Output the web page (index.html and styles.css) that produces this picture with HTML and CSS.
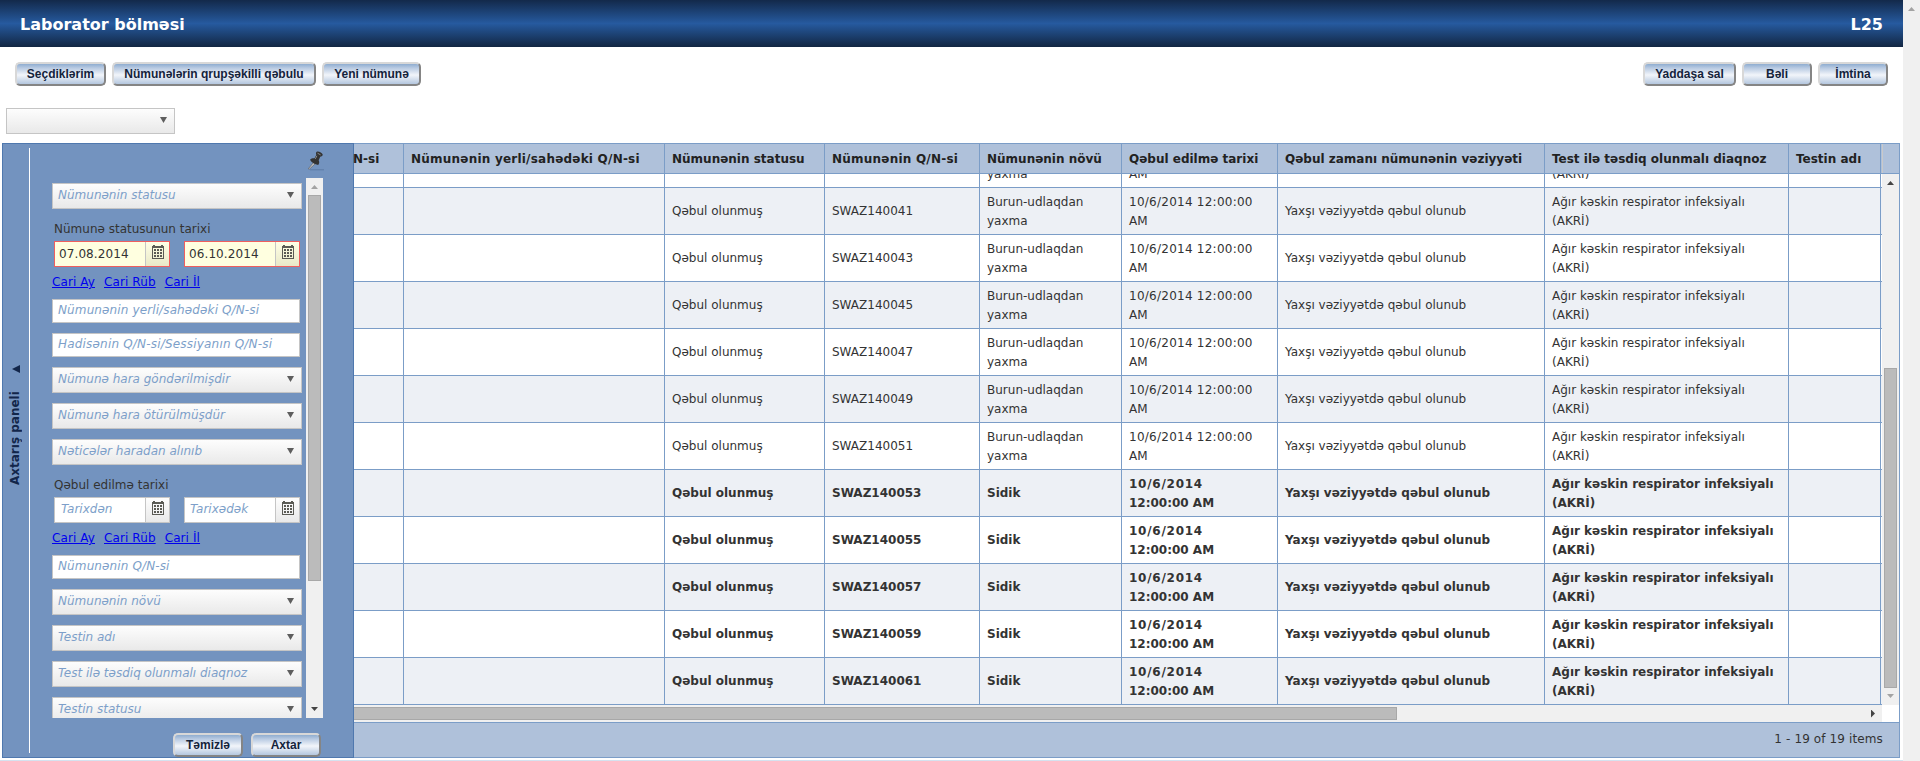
FILE: index.html
```
<!DOCTYPE html>
<html lang="az">
<head>
<meta charset="utf-8">
<title>Laborator bölməsi</title>
<link rel="stylesheet" href="styles.css">
</head>
<body>
<div class="page">
  <header class="titlebar"><h1>Laborator bölməsi</h1><span class="code">L25</span></header>
  <div class="toolbar">
    <button class="btn w1">Seçdiklərim</button>
    <button class="btn w2">Nümunələrin qrupşəkilli qəbulu</button>
    <button class="btn w3">Yeni nümunə</button>
    <span class="grow"></span>
    <button class="btn w4">Yaddaşa sal</button>
    <button class="btn w5">Bəli</button>
    <button class="btn w5">İmtina</button>
  </div>
  <div class="filter-row"><div class="select top-select"><span></span><i class="caret"></i></div></div>
  <main class="work">
    <aside class="search">
      <div class="rail"><span class="rail-text">Axtarış paneli</span><i class="rail-arrow"></i></div>
      <div class="panel">
        <div class="pin-row">
          <svg class="pin" width="18" height="20" viewBox="0 0 18 20"><path d="M3 18.800h14" stroke="#5d7ba5" stroke-width="1"/><path d="M6.500 11.500 1.300 17.800 2.100 18.300 8.200 12.800z" fill="#c9c9c9" stroke="#555" stroke-width=".6"/><path d="M3 8.800C4.600 7.200 6 7 7.500 7.300L9.300 3.900C8.700 2.400 9 1 10.100.6 12.500.4 15.200 1.800 15.800 3.800 15.300 5.200 14.200 5.700 13.200 5.700L11.700 9.300C12.500 10.800 12.400 12.600 11.200 14 8 13.500 4.500 11.700 3 8.800z" fill="#333"/><path d="M10.500 2.200 13.600 3.900M9.900 4.800 8.300 7.900" stroke="#888" fill="none"/></svg>
        </div>
        <div class="form-area">
          <form class="fields">
            <div class="select"><span>Nümunənin statusu</span><i class="caret"></i></div>
            <label class="cap">Nümunə statusunun tarixi</label>
            <div class="dates">
              <div class="date hot"><span>07.08.2014</span><b><svg class="cal"><use href="#cal"/></svg></b></div>
              <div class="date hot"><span>06.10.2014</span><b><svg class="cal"><use href="#cal"/></svg></b></div>
            </div>
            <div class="links"><a>Cari Ay</a><a>Cari Rüb</a><a>Cari İl</a></div>
            <div class="input ls1">Nümunənin yerli/sahədəki Q/N-si</div>
            <div class="input ls2">Hadisənin Q/N-si/Sessiyanın Q/N-si</div>
            <div class="select"><span>Nümunə hara göndərilmişdir</span><i class="caret"></i></div>
            <div class="select"><span>Nümunə hara ötürülmüşdür</span><i class="caret"></i></div>
            <div class="select"><span>Nəticələr haradan alınıb</span><i class="caret"></i></div>
            <label class="cap">Qəbul edilmə tarixi</label>
            <div class="dates">
              <div class="date from"><span>Tarixdən</span><b><svg class="cal"><use href="#cal"/></svg></b></div>
              <div class="date"><span>Tarixədək</span><b><svg class="cal"><use href="#cal"/></svg></b></div>
            </div>
            <div class="links"><a>Cari Ay</a><a>Cari Rüb</a><a>Cari İl</a></div>
            <div class="input ls1">Nümunənin Q/N-si</div>
            <div class="select"><span>Nümunənin növü</span><i class="caret"></i></div>
            <div class="select"><span>Testin adı</span><i class="caret"></i></div>
            <div class="select"><span>Test ilə təsdiq olunmalı diaqnoz</span><i class="caret"></i></div>
            <div class="select"><span>Testin statusu</span><i class="caret"></i></div>
          </form>
          <div class="vscroll"><i class="up off"></i><div class="thumb form-thumb"></div><span class="grow"></span><i class="down"></i></div>
        </div>
        <div class="actions"><button class="btn w5">Təmizlə</button><button class="btn w5">Axtar</button></div>
      </div>
    </aside>
    <section class="grid">
      <div class="head"><div class="cell c0">N-si</div><div class="cell ls3">Nümunənin yerli/sahədəki Q/N-si</div><div class="cell">Nümunənin statusu</div><div class="cell ls3">Nümunənin Q/N-si</div><div class="cell">Nümunənin növü</div><div class="cell">Qəbul edilmə tarixi</div><div class="cell">Qəbul zamanı nümunənin vəziyyəti</div><div class="cell">Test ilə təsdiq olunmalı diaqnoz</div><div class="cell">Testin adı</div><div class="cell end"></div></div>
      <div class="middle">
        <div class="rows" id="rows"></div>
        <div class="vscroll"><i class="up"></i><span class="grow"></span><div class="thumb grid-thumb"></div><i class="down off"></i></div>
      </div>
      <div class="hscroll"><div class="track"><div class="hthumb"></div><i class="right"></i></div></div>
      <footer class="pager">1 - 19 of 19 items</footer>
    </section>
  </main>
  <div class="bottom-line"></div>
</div>
<div class="page-scroll"><i class="up off"></i></div>
<svg class="defs" width="0" height="0"><symbol id="cal" viewBox="0 0 12 14"><path fill="#5b5b55" fill-rule="evenodd" d="M0 1h1V0h2v1h6V0h2v1h1v13H0zM1 3v10h10V3z"/><path fill="#5b5b55" d="M2 4h2v2H2zM5 4h2v2H5zM8 4h2v2H8zM2 7h2v2H2zM5 7h2v2H5zM8 7h2v2H8zM2 10h2v2H2zM5 10h2v2H5zM8 10h2v2H8z"/></symbol></svg>
<script src="grid.js"></script>
</body>
</html>
```
FILE: styles.css
```
* { box-sizing: border-box; }
body { margin: 0; height: 761px; overflow: hidden; display: flex; background: #fff; font: 12px/19px Verdana, "DejaVu Sans", sans-serif; color: #333; }
.page { width: 1903px; height: 761px; display: flex; flex-direction: column; }
.page-scroll { width: 17px; background: #f0f0f0; display: flex; justify-content: center; padding-top: 7px; }
.grow { flex: 1; }
.defs { position: absolute; }
.titlebar { height: 47px; padding: 1px 20px 0 20px; display: flex; justify-content: space-between; align-items: center; color: #fff; font-size: 16px; font-weight: bold; background: linear-gradient(#13294a, #265a9f 50%, #122642); }
.titlebar h1 { margin: 0; font-size: 16px; }
.toolbar { height: 61px; padding: 15px 15px 0 15px; display: flex; gap: 6px; align-items: flex-start; }
.btn { height: 24px; padding: 1px 0; border: 2px solid; border-color: #d8d8d8 #858585 #858585 #d8d8d8; border-radius: 5px; font: bold 12px/18px "Liberation Sans", Arial, sans-serif; color: #14233c; white-space: nowrap; background: linear-gradient(#8fadd0, #b8cae2 20%, #f2f5fa 55%, #b4c7df); }
.w1 { width: 91px; }
.w2 { width: 204px; }
.w3 { width: 99px; }
.w4 { width: 93px; }
.w5 { width: 70px; }
.filter-row { height: 35px; padding-left: 6px; }
.select { width: 250px; height: 26px; flex: none; border: 1px solid #c5c5c5; background: linear-gradient(#fdfdfd, #e9e9e9); display: flex; justify-content: space-between; padding: 2px 7px 0 5px; color: #7d9fc9; font-style: italic; }
.top-select { width: 169px; }
.caret { width: 7px; height: 6px; margin-top: 6px; background: #5e5e5e; clip-path: polygon(0 0, 100% 0, 50% 100%); }
.work { height: 615px; width: 1898px; margin-left: 2px; display: flex; }
.search { width: 352px; border: 1px solid #4f78ae; background: #7393bf; display: flex; }
.rail { width: 27px; height: 605px; margin-top: 4px; border-right: 1px solid #fff; display: flex; flex-direction: column-reverse; align-items: center; color: #12264a; padding-bottom: 268px; }
.rail-text { writing-mode: vertical-rl; transform: rotate(180deg); font-weight: bold; width: 19px; height: 96px; white-space: nowrap; margin-left: -2px; }
.rail-arrow { width: 8px; height: 8px; margin-bottom: 16px; background: #12264a; clip-path: polygon(0 50%, 100% 0, 100% 100%); }
.panel { flex: 1; padding-left: 22px; }
.pin-row { height: 34px; padding: 7px 0 0 255px; }
.pin { display: block; }
.form-area { display: flex; width: 271px; height: 540px; }
.fields { width: 254px; height: 540px; overflow: hidden; display: flex; flex-direction: column; gap: 10px; padding-top: 5px; }
.cap { display: block; height: 19px; padding-top: 1px; margin: 0 0 -7px 2px; white-space: nowrap; }
.dates { display: flex; gap: 14px; padding-left: 2px; height: 26px; }
.date { width: 116px; height: 26px; border: 1px solid #c5c5c5; background: #fff; display: flex; color: #7d9fc9; font-style: italic; }
.date span { width: 90px; padding: 2px 0 0 5px; }
.date.from span { padding-left: 6px; }
.date b { width: 24px; flex: none; border-left: 1px solid #c5c5c5; background: linear-gradient(#fdfdfd, #e9e9e9); padding: 3px 0 0 6px; }
.date.hot { border-color: #ef5f5f; background: #ffffe0; color: #333; font-style: normal; }
.date.hot span { padding: 3px 0 0 4px; letter-spacing: .1px; }
.date.hot b { background: linear-gradient(#ffffe6, #e9e9c8); }
.cal { width: 12px; height: 14px; display: block; }
.links { height: 17px; margin: -4px 0 -1px; display: flex; gap: 9px; color: #00e; line-height: 18px; letter-spacing: .1px; white-space: nowrap; }
.links a { text-decoration: underline; }
.input { width: 248px; height: 24px; flex: none; border: 1px solid #c5c5c5; background: #fff; padding: 1px 0 0 5px; color: #7d9fc9; font-style: italic; white-space: nowrap; }
.ls1 { letter-spacing: .12px; }
.ls2 { letter-spacing: .19px; }
.ls3 { letter-spacing: .22px; }
.actions { display: flex; gap: 8px; padding: 15px 0 0 121px; }
.vscroll { width: 17px; background: #f0f0f0; display: flex; flex-direction: column; align-items: center; padding: 7px 0; }
.up, .down { width: 7px; height: 4px; background: #444; flex: none; clip-path: polygon(50% 0, 100% 100%, 0 100%); }
.down { clip-path: polygon(0 0, 100% 0, 50% 100%); }
.off { background: #a3a3a3; }
.thumb { width: 13px; background: #bbb; border: 1px solid #a8a8a8; }
.form-thumb { height: 386px; margin-top: 6px; }
.grid-thumb { height: 320px; margin-bottom: 6px; }
.grid { width: 1546px; border: 1px solid #7b9dc7; border-left: 0; }
.head, .row { display: grid; grid-template-columns: 50px 261px 160px 155px 142px 156px 267px 244px 92px 1fr; }
.head { height: 30px; background: #afc1da; border-bottom: 1px solid #7b9dc7; font-weight: bold; color: #222; }
.cell { border-right: 1px solid #7b9dc7; padding: 0 7px; display: flex; align-items: center; }
.head .cell { white-space: nowrap; padding: 1px 0 0 7px; }
.head .cell.c0 { padding-left: 0; margin-left: -1px; }
.cell.end { border-right: 0; }
.head .end { border-left: 1px solid #c9c9c9; margin-left: 1px; }
.middle { display: flex; height: 531px; }
.rows { width: 1528px; height: 531px; overflow: hidden; display: flex; flex-direction: column; justify-content: flex-end; }
.row { height: 47px; flex: none; border-bottom: 1px solid #7b9dc7; background: #fff; }
.row:nth-child(even) { background: #edf0f5; }
.row.bold { font-weight: bold; }
.row .cell { overflow: hidden; }
.row .cell.two { padding-top: 2px; }
.when { letter-spacing: .25px; }
.bold .when { letter-spacing: .75px; }
.hscroll { height: 17px; background: #fff; }
.track { width: 1528px; height: 17px; background: #f0f0f0; display: flex; align-items: center; justify-content: space-between; padding-right: 7px; }
.hthumb { width: 1043px; height: 13px; background: #bbb; border: 1px solid #a8a8a8; border-left: 0; }
.right { width: 4px; height: 8px; background: #444; clip-path: polygon(0 0, 100% 50%, 0 100%); }
.pager { height: 35px; border-top: 1px solid #7b9dc7; background: #afc1da; text-align: right; padding: 7px 16px 0 0; letter-spacing: .12px; }
.bottom-line { height: 1px; margin-top: 2px; background: #d5e2ef; }
```
FILE: grid.js
```
const samples = [
  ["SWAZ140039", 0], ["SWAZ140041", 0], ["SWAZ140043", 0], ["SWAZ140045", 0], ["SWAZ140047", 0], ["SWAZ140049", 0], ["SWAZ140051", 0],
  ["SWAZ140053", 1], ["SWAZ140055", 1], ["SWAZ140057", 1], ["SWAZ140059", 1], ["SWAZ140061", 1]
];
document.getElementById("rows").innerHTML = samples.map(([id, urine]) => {
  const values = ["", "", "Qəbul olunmuş", id, urine ? "Sidik" : "Burun-udlaqdan<br>yaxma",
    urine ? '<span class="when">10/6/2014</span><br>12:00:00 AM' : '<span class="when">10/6/2014 12:00:00</span><br>AM',
    "Yaxşı vəziyyətdə qəbul olunub", "Ağır kəskin respirator infeksiyalı<br>(AKRİ)", ""];
  return `<div class="row${urine ? " bold" : ""}">` + values.map(v => `<div class="cell${v.includes("<br>") ? " two" : ""}"><span>${v}</span></div>`).join("") + "</div>";
}).join("");
```
